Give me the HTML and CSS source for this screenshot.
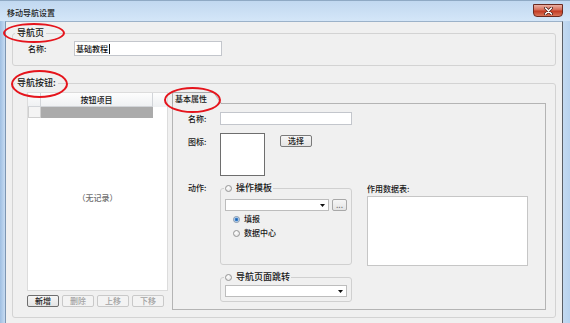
FILE: index.html
```html
<!DOCTYPE html>
<html lang="zh-CN">
<head>
  <meta charset="UTF-8">
  <title>移动导航设置</title>
  <link rel="stylesheet" href="styles.css">
</head>
<body>
  <div class="window">
    <div class="titlebar">
      <span class="title">移动导航设置</span>
      <span class="close">
        <svg width="9" height="8" viewBox="0 0 9 8">
          <path d="M1.5 1 L7.5 7 M7.5 1 L1.5 7" stroke="#4a1a12" stroke-width="3" stroke-linecap="round"/>
          <path d="M1.5 1 L7.5 7 M7.5 1 L1.5 7" stroke="#fff" stroke-width="1.6" stroke-linecap="round"/>
        </svg>
      </span>
    </div>

    <div class="client">
      <!-- 导航页 -->
      <fieldset class="group group-page">
        <legend>导航页</legend>
        <div class="page-body">
          <span class="page-label">名称:</span>
          <div class="textbox page-name">基础教程<span class="caret"></span></div>
        </div>
      </fieldset>

      <!-- 导航按钮 -->
      <fieldset class="group group-buttons">
        <legend>导航按钮:</legend>
        <div class="buttons-layout">
          <div class="list-col">
            <div class="list">
              <div class="list-head">
                <span class="cell-num"></span>
                <span class="cell-name">按钮项目</span>
                <span class="cell-fill"></span>
              </div>
              <div class="list-row">
                <span class="cell-num"></span>
                <span class="cell-name selected"></span>
              </div>
              <div class="list-empty">（无记录）</div>
            </div>
            <div class="list-tools">
              <button class="btn default">新增</button>
              <button class="btn" disabled>删除</button>
              <button class="btn" disabled>上移</button>
              <button class="btn" disabled>下移</button>
            </div>
          </div>

          <div class="tabs">
            <div class="tab-strip">
              <span class="tab">基本属性</span>
              <span class="tab-rest"></span>
            </div>
            <div class="tab-panel">
              <div class="prow prow-name">
                <span class="plabel">名称:</span>
                <div class="textbox pfield"></div>
              </div>
              <div class="prow prow-icon">
                <span class="plabel">图标:</span>
                <div class="icon-box"></div>
                <button class="btn btn-choose">选择</button>
              </div>
              <div class="prow prow-action">
                <span class="plabel">动作:</span>
                <div class="action-left">
                  <fieldset class="sub sub-template">
                    <legend><span class="radio"></span>操作模板</legend>
                    <div class="sub-body">
                      <div class="combo-row">
                        <div class="combo"><svg width="5" height="3" viewBox="0 0 5 3"><path d="M0 0 H5 L2.5 3 Z" fill="#111"/></svg></div>
                        <button class="btn btn-dots">...</button>
                      </div>
                      <div class="radio-line"><span class="radio checked"></span>填报</div>
                      <div class="radio-line"><span class="radio"></span>数据中心</div>
                    </div>
                  </fieldset>
                  <fieldset class="sub sub-jump">
                    <legend><span class="radio"></span>导航页面跳转</legend>
                    <div class="sub-body">
                      <div class="combo"><svg width="5" height="3" viewBox="0 0 5 3"><path d="M0 0 H5 L2.5 3 Z" fill="#111"/></svg></div>
                    </div>
                  </fieldset>
                </div>
                <div class="action-right">
                  <span class="table-label">作用数据表:</span>
                  <div class="textbox table-box"></div>
                </div>
              </div>
            </div>
          </div>
        </div>
      </fieldset>
    </div>

    <!-- 红色标注圈 -->
    <div class="mark mark-page"></div>
    <div class="mark mark-buttons"></div>
    <div class="mark mark-props"></div>
  </div>
</body>
</html>
```

FILE: styles.css
```css
* {
  box-sizing: border-box;
}
body {
  margin: 0;
  font-family: "Noto Sans CJK SC", "Noto Sans", sans-serif;
  font-size: 8px;
  font-weight: 500;
  color: #161616;
  background: #fff;
}
.window {
  position: relative;
  width: 570px;
  height: 323px;
  overflow: hidden;
  display: flex;
  flex-direction: column;
  background: linear-gradient(90deg, #9fbfe2 0, #c6dbf2 5px, #c9ddf2 560px, #b7d2ee 570px);
}
.titlebar {
  height: 21px;
  flex: none;
  display: flex;
  align-items: flex-start;
  padding: 0 7px;
  border-top: 1px solid #8fa9c4;
  background: linear-gradient(#c1d8f0, #d4e6f8);
}
.title {
  margin-top: 6px;
  line-height: 12px;
  color: #1e1e1e;
}
.close {
  margin-left: auto;
  margin-top: 3px;
  width: 30px;
  height: 13px;
  display: flex;
  align-items: center;
  justify-content: center;
  border: 1px solid #6b2a20;
  border-radius: 0 0 4px 4px;
  background: linear-gradient(#eab0a3, #d66b56 45%, #c23a22 55%, #d9765a);
}
.client {
  flex: 1;
  margin: 0 7px 0 5px;
  padding: 5px 6px 0;
  background: #f0f0f0;
  border-top: 1px solid #9cb2c9;
  border-left: 1px solid #7d96b2;
  border-right: 1px solid #5a5f66;
}

/* 分组框 */
.group {
  margin: 0;
  padding: 0;
  min-width: 0;
  border: 1px solid #d3d3d3;
  border-radius: 3px;
}
.group legend {
  margin-left: 2px;
  padding: 0 2px;
  line-height: 12px;
  font-size: 9px;
}
.page-body {
  display: flex;
  align-items: center;
  padding: 2px 0 9px 15px;
}
.page-label {
  width: 46px;
}
.textbox {
  background: #fff;
  border: 1px solid #c3c6cc;
}
.page-name {
  width: 148px;
  height: 15px;
  padding-left: 1px;
  line-height: 13px;
  display: flex;
  align-items: center;
}
.caret {
  width: 1px;
  height: 10px;
  background: #111;
  margin-left: 1px;
}
.group-buttons {
  margin-top: 11px;
}
.buttons-layout {
  height: 228px;
  display: flex;
  gap: 4px;
  padding: 3px 9px 7px 14px;
}

/* 按钮项目列表 */
.list-col {
  width: 141px;
  display: flex;
  flex-direction: column;
}
.list {
  flex: 1;
  background: #fff;
  border: 1px solid #dcdcdc;
  display: flex;
  flex-direction: column;
}
.list-head, .list-row {
  display: flex;
}
.list-head {
  height: 14px;
  background: linear-gradient(#fdfdfd, #eef0f2);
}
.list-head span {
  border-right: 1px solid #d2d5d9;
  border-bottom: 1px solid #d2d5d9;
}
.cell-num {
  width: 13px;
  flex: none;
}
.cell-name {
  width: 112px;
  flex: none;
  text-align: center;
  line-height: 13px;
}
.cell-fill {
  flex: 1;
  border-right: none !important;
  border-bottom: none !important;
}
.list-row {
  height: 11px;
}
.list-row .cell-num {
  background: #f4f4f4;
  border: 1px solid #cfcfcf;
  border-top: none;
}
.selected {
  background: #ababab;
}
.list-empty {
  text-align: center;
  color: #6f6f6f;
  line-height: 12px;
  padding-top: 74px;
}
.list-tools {
  flex: none;
  display: flex;
  gap: 3px;
  margin: 4px 0 3px;
  height: 12px;
}
.btn {
  height: 12px;
  width: 32px;
  padding: 0;
  font: inherit;
  line-height: 10px;
  color: #1b1b1b;
  border: 1px solid #adadad;
  border-radius: 2px;
  background: linear-gradient(#f6f6f6, #e4e4e4);
}
.btn.default {
  border-color: #6e6e6e;
}
.btn:disabled {
  color: #a3a3a3;
  border-color: #c9c9c9;
  background: #f3f3f3;
}

/* 基本属性页 */
.tabs {
  flex: 1;
  display: flex;
  flex-direction: column;
}
.tab-strip {
  height: 12px;
  flex: none;
  display: flex;
}
.tab {
  position: relative;
  height: 12px;
  padding: 0 6px 0 2px;
  line-height: 11px;
  border-top: 1px solid #a9a9a9;
  border-left: 1px solid #a9a9a9;
  border-radius: 2px 0 0 0;
}
.tab::after {
  content: "";
  position: absolute;
  top: -1px;
  right: -1px;
  width: 0;
  height: 12px;
  border-right: 1px solid #a9a9a9;
  transform: skewX(34deg);
  transform-origin: top left;
}
.tab-rest {
  flex: 1;
  margin-left: 8px;
  border-bottom: 1px solid #b4b4b4;
}
.tab-panel {
  flex: 1;
  padding: 8px 0 0 15px;
  border: 1px solid #b4b4b4;
  border-top: none;
}
.prow {
  display: flex;
  align-items: flex-start;
}
.plabel {
  width: 32px;
  flex: none;
  line-height: 12px;
}
.prow-name {
  align-items: center;
}
.pfield {
  width: 132px;
  height: 13px;
}
.prow-icon {
  margin-top: 8px;
}
.prow-icon .plabel {
  margin-top: 3px;
}
.icon-box {
  width: 45px;
  height: 43px;
  background: #fff;
  border: 1px solid #6e6e6e;
}
.btn-choose {
  margin: 2px 0 0 15px;
  border-color: #7a7a7a;
}
.prow-action {
  margin-top: 6px;
}
.action-left {
  width: 132px;
  flex: none;
}
.sub {
  margin: 0;
  padding: 0;
  min-width: 0;
  border: 1px solid #d0d0d0;
  border-radius: 3px;
}
.sub legend {
  margin-left: 3px;
  padding: 0 1px;
  line-height: 12px;
  display: flex;
  align-items: center;
  gap: 4px;
}
.sub-template .sub-body {
  height: 70px;
  padding: 5px 4px 0;
}
.sub-jump {
  margin-top: 6px;
}
.sub-jump .sub-body {
  padding: 2px 4px 4px;
}
.combo-row {
  display: flex;
  gap: 3px;
}
.combo {
  flex: 1;
  height: 12px;
  display: flex;
  align-items: center;
  justify-content: flex-end;
  padding-right: 3px;
  background: #fff;
  border: 1px solid #bdbdbd;
}
.btn-dots {
  width: 15px;
  color: #666;
  line-height: 8px;
  border-color: #a8a8a8;
}
.radio-line {
  margin-top: 2px;
  padding-left: 8px;
  display: flex;
  align-items: center;
  gap: 4px;
  line-height: 12px;
}
.radio {
  width: 7px;
  height: 7px;
  flex: none;
  border-radius: 50%;
  border: 1px solid #959595;
  background: radial-gradient(circle at 40% 35%, #ffffff, #dcdcdc);
}
.radio.checked {
  border-color: #7f94ab;
  background: radial-gradient(circle, #1d5ea8 0, #3c83cf 1.4px, #c7daf0 2.2px, #f2f2f2 3px);
}
.action-right {
  margin-left: 15px;
  width: 161px;
  flex: none;
  display: flex;
  flex-direction: column;
}
.table-label {
  margin-top: 1px;
  line-height: 12px;
}
.table-box {
  margin-top: 1px;
  height: 70px;
  border-color: #c6c6c6;
}

/* 红色标注圈 */
.mark {
  position: absolute;
  border: 2px solid #e5141c;
  border-radius: 50%;
}
.mark-page {
  left: 3px;
  top: 23px;
  width: 62px;
  height: 20px;
}
.mark-buttons {
  left: 11px;
  top: 70px;
  width: 57px;
  height: 28px;
}
.mark-props {
  left: 164px;
  top: 87px;
  width: 57px;
  height: 26px;
}
```
